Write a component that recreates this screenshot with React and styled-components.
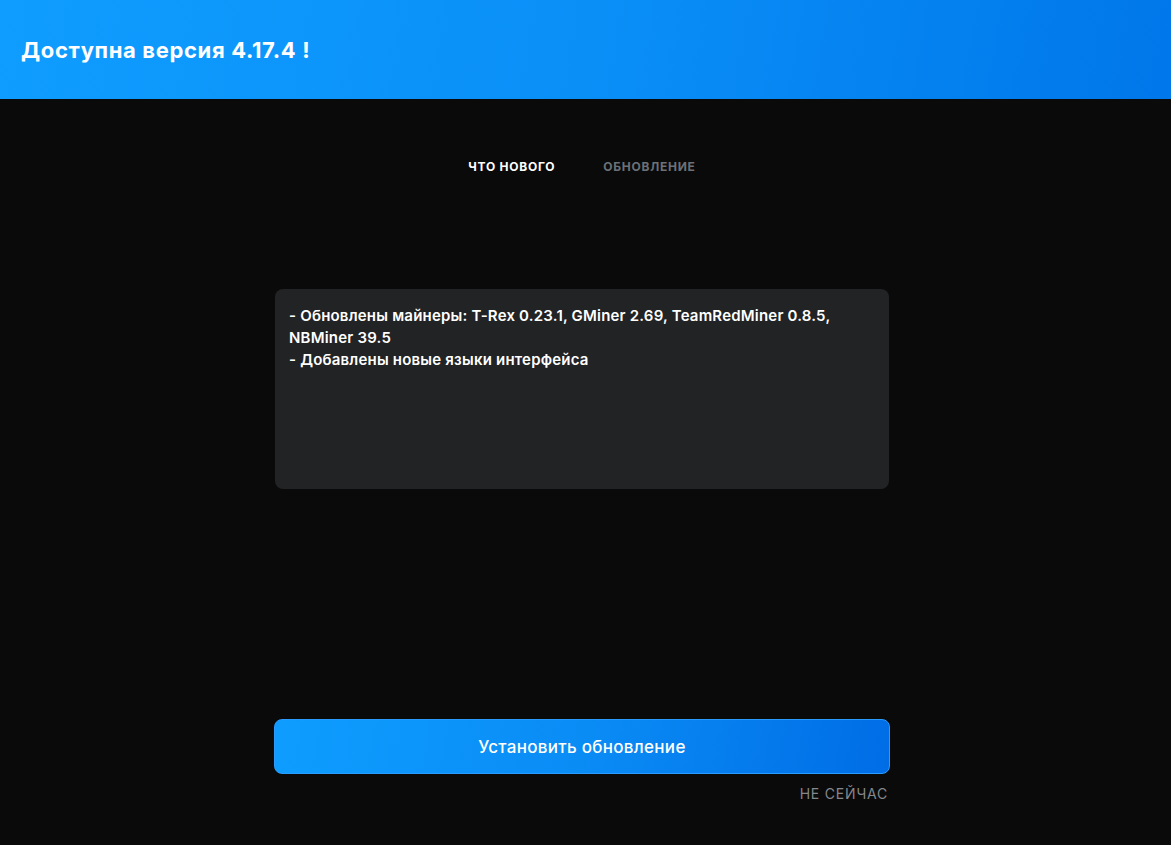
import React, { useState } from 'react';
import styled, { createGlobalStyle } from 'styled-components';

const GlobalStyle = createGlobalStyle`
  html, body {
    margin: 0;
    padding: 0;
    background: #0a0a0a;
  }
  body {
    font-family: Inter, "Noto Sans", sans-serif;
  }
`;

const Page = styled.div`
  width: 1171px;
  height: 845px;
  display: flex;
  flex-direction: column;
  background: #0a0a0a;
`;

const Header = styled.header`
  height: 99px;
  display: flex;
  align-items: center;
  padding: 0 21px;
  box-sizing: border-box;
  background: linear-gradient(100deg, #0f9dff 0%, #0a8ff7 50%, #0077ea 100%);
`;

const Title = styled.h1`
  margin: 0;
  color: #ffffff;
  font-size: 22px;
  font-weight: 700;
  letter-spacing: 0.65px;
`;

const Body = styled.main`
  flex: 1;
  display: flex;
  flex-direction: column;
  align-items: center;
  padding-right: 7px;
`;

const Tabs = styled.nav`
  display: flex;
  gap: 48px;
  margin-top: 60px;
`;

const Tab = styled.button`
  background: none;
  border: none;
  padding: 0;
  cursor: pointer;
  font-family: Inter, "Noto Sans", sans-serif;
  font-size: 12px;
  font-weight: 700;
  letter-spacing: 0.75px;
  color: ${(p) => (p.active ? '#ffffff' : '#6c7177')};
`;

const Notes = styled.div`
  width: 614px;
  height: 200px;
  margin-top: 115px;
  box-sizing: border-box;
  padding: 16px 14px;
  background: #222325;
  border-radius: 8px;
  color: #ffffff;
  font-size: 15px;
  font-weight: 600;
  line-height: 22px;
  letter-spacing: 0.2px;
`;

const Line = styled.div``;

const Actions = styled.div`
  width: 616px;
  margin-top: 230px;
  display: flex;
  flex-direction: column;
  align-items: flex-end;
`;

const InstallButton = styled.button`
  width: 100%;
  height: 55px;
  border: 1px solid #2b9cff;
  border-radius: 8px;
  background: linear-gradient(100deg, #0e9dff 0%, #0a8cf5 50%, #006de6 100%);
  color: #ffffff;
  font-family: Inter, "Noto Sans", sans-serif;
  font-size: 17px;
  font-weight: 500;
  letter-spacing: 0.3px;
  cursor: pointer;
`;

const LaterButton = styled.button`
  margin-top: 11px;
  margin-right: 2px;
  background: none;
  border: none;
  padding: 0;
  color: #84878b;
  font-family: Inter, "Noto Sans", sans-serif;
  font-size: 14px;
  letter-spacing: 0.8px;
  cursor: pointer;
`;

export default function App() {
  const [tab, setTab] = useState('news');

  return (
    <Page>
      <GlobalStyle />
      <Header>
        <Title>Доступна версия 4.17.4 !</Title>
      </Header>
      <Body>
        <Tabs>
          <Tab active={tab === 'news'} onClick={() => setTab('news')}>ЧТО НОВОГО</Tab>
          <Tab active={tab === 'update'} onClick={() => setTab('update')}>ОБНОВЛЕНИЕ</Tab>
        </Tabs>
        <Notes>
          <Line>- Обновлены майнеры: T-Rex 0.23.1, GMiner 2.69, TeamRedMiner 0.8.5, NBMiner 39.5</Line>
          <Line>- Добавлены новые языки интерфейса</Line>
        </Notes>
        <Actions>
          <InstallButton>Установить обновление</InstallButton>
          <LaterButton>НЕ СЕЙЧАС</LaterButton>
        </Actions>
      </Body>
    </Page>
  );
}
